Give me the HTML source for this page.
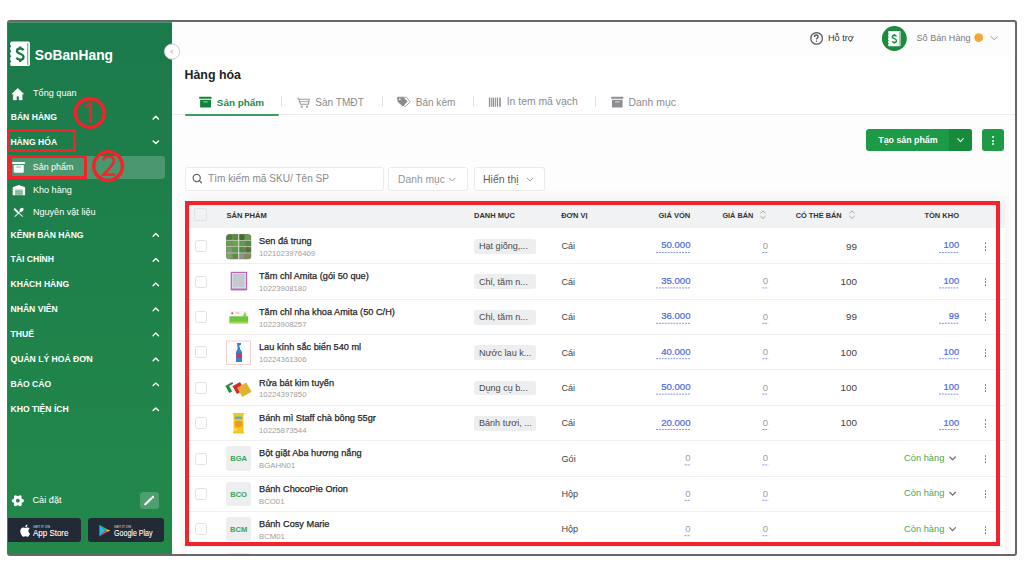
<!DOCTYPE html><html><head><meta charset="utf-8"><style>
*{box-sizing:border-box;margin:0;padding:0}
html,body{width:1024px;height:577px;overflow:hidden;background:#fff;font-family:"Liberation Sans",sans-serif;}
.a{position:absolute;white-space:nowrap}
.b{position:absolute}
svg{position:absolute;overflow:visible}
</style></head><body>
<div class="b" style="left:0;top:0;width:1024px;height:577px;clip-path:inset(22px 9px 23px 8px)">
<div class="b" style="left:8px;top:22px;width:163.5px;height:532px;background:linear-gradient(#1b7a4b,#22894a)"></div>
<div class="b" style="left:171.5px;top:22px;width:843.5px;height:532px;background:#fdfdfd"></div>
<div class="b" style="left:171.5px;top:22px;width:843.5px;height:34px;background:#fdfdfd"></div>
<div class="b" style="left:171.5px;top:55.5px;width:843.5px;height:1px;background:#f6f6f6"></div>
<div class="b" style="left:171.5px;top:56px;width:843.5px;height:59px;background:#fff"></div>
<div class="b" style="left:8px;top:22px;width:163.5px;height:1px;background:rgba(255,255,255,.22)"></div>
<div class="a" style="top:49.00px;font-size:13.8px;line-height:13.8px;color:#fff;font-weight:bold;left:34.80px;">SoBanHang</div>
<div class="a" style="top:89.00px;font-size:9.15px;line-height:9.15px;color:#fff;left:33.00px;">Tổng quan</div>
<div class="b" style="left:12px;top:156.1px;width:152.6px;height:22.8px;background:rgba(255,255,255,.2);border-radius:3px"></div>
<div class="a" style="top:113.00px;font-size:8.6px;line-height:8.6px;color:#fff;font-weight:bold;left:10.70px;">BÁN HÀNG</div>
<div class="a" style="top:138.00px;font-size:8.6px;line-height:8.6px;color:#fff;font-weight:bold;left:10.40px;">HÀNG HÓA</div>
<div class="a" style="top:163.00px;font-size:8.92px;line-height:8.92px;color:#fff;left:32.75px;">Sản phẩm</div>
<div class="a" style="top:186.00px;font-size:9.1px;line-height:9.1px;color:#fff;left:32.90px;">Kho hàng</div>
<div class="a" style="top:208.00px;font-size:9.1px;line-height:9.1px;color:#fff;left:32.90px;">Nguyên vật liệu</div>
<div class="a" style="top:231.00px;font-size:8.6px;line-height:8.6px;color:#fff;font-weight:bold;left:10.50px;">KÊNH BÁN HÀNG</div>
<div class="a" style="top:255.00px;font-size:8.6px;line-height:8.6px;color:#fff;font-weight:bold;left:10.50px;">TÀI CHÍNH</div>
<div class="a" style="top:280.00px;font-size:8.6px;line-height:8.6px;color:#fff;font-weight:bold;left:10.50px;">KHÁCH HÀNG</div>
<div class="a" style="top:305.00px;font-size:8.6px;line-height:8.6px;color:#fff;font-weight:bold;left:10.50px;">NHÂN VIÊN</div>
<div class="a" style="top:330.00px;font-size:8.6px;line-height:8.6px;color:#fff;font-weight:bold;left:10.50px;">THUẾ</div>
<div class="a" style="top:355.00px;font-size:8.6px;line-height:8.6px;color:#fff;font-weight:bold;left:10.50px;">QUẢN LÝ HOÁ ĐƠN</div>
<div class="a" style="top:380.00px;font-size:8.6px;line-height:8.6px;color:#fff;font-weight:bold;left:10.50px;">BÁO CÁO</div>
<div class="a" style="top:405.00px;font-size:8.6px;line-height:8.6px;color:#fff;font-weight:bold;left:10.50px;">KHO TIỆN ÍCH</div>
<svg style="left:0;top:0" width="1024" height="577"><path d="M153.10000000000002,118.89999999999999 L155.8,116.3 L158.5,118.89999999999999" fill="none" stroke="#fff" stroke-width="1.4" stroke-linecap="round" stroke-linejoin="round"/></svg>
<svg style="left:0;top:0" width="1024" height="577"><path d="M153.10000000000002,140.89999999999998 L155.8,143.5 L158.5,140.89999999999998" fill="none" stroke="#fff" stroke-width="1.4" stroke-linecap="round" stroke-linejoin="round"/></svg>
<svg style="left:0;top:0" width="1024" height="577"><path d="M153.10000000000002,236.20000000000002 L155.8,233.6 L158.5,236.20000000000002" fill="none" stroke="#fff" stroke-width="1.4" stroke-linecap="round" stroke-linejoin="round"/></svg>
<svg style="left:0;top:0" width="1024" height="577"><path d="M153.10000000000002,261.2 L155.8,258.59999999999997 L158.5,261.2" fill="none" stroke="#fff" stroke-width="1.4" stroke-linecap="round" stroke-linejoin="round"/></svg>
<svg style="left:0;top:0" width="1024" height="577"><path d="M153.10000000000002,285.7 L155.8,283.09999999999997 L158.5,285.7" fill="none" stroke="#fff" stroke-width="1.4" stroke-linecap="round" stroke-linejoin="round"/></svg>
<svg style="left:0;top:0" width="1024" height="577"><path d="M153.10000000000002,310.7 L155.8,308.09999999999997 L158.5,310.7" fill="none" stroke="#fff" stroke-width="1.4" stroke-linecap="round" stroke-linejoin="round"/></svg>
<svg style="left:0;top:0" width="1024" height="577"><path d="M153.10000000000002,335.7 L155.8,333.09999999999997 L158.5,335.7" fill="none" stroke="#fff" stroke-width="1.4" stroke-linecap="round" stroke-linejoin="round"/></svg>
<svg style="left:0;top:0" width="1024" height="577"><path d="M153.10000000000002,360.7 L155.8,358.09999999999997 L158.5,360.7" fill="none" stroke="#fff" stroke-width="1.4" stroke-linecap="round" stroke-linejoin="round"/></svg>
<svg style="left:0;top:0" width="1024" height="577"><path d="M153.10000000000002,385.59999999999997 L155.8,382.99999999999994 L158.5,385.59999999999997" fill="none" stroke="#fff" stroke-width="1.4" stroke-linecap="round" stroke-linejoin="round"/></svg>
<svg style="left:0;top:0" width="1024" height="577"><path d="M153.10000000000002,410.5 L155.8,407.9 L158.5,410.5" fill="none" stroke="#fff" stroke-width="1.4" stroke-linecap="round" stroke-linejoin="round"/></svg>
<div class="a" style="top:496.00px;font-size:9.16px;line-height:9.16px;color:#fff;left:32.50px;">Cài đặt</div>
<div class="b" style="left:140px;top:491.6px;width:19.4px;height:17.4px;background:rgba(255,255,255,.2);border-radius:3px"></div>
<div class="b" style="left:4px;top:518.3px;width:77.4px;height:23.7px;background:#222a36;border-radius:3px"></div>
<div class="b" style="left:87.9px;top:518.3px;width:76.4px;height:23.7px;background:#222a36;border-radius:3px"></div>
<div class="a" style="top:526.00px;font-size:3.4px;line-height:3.4px;color:#e8e8e8;left:33.00px;">GET IT ON</div>
<div class="a" style="top:528.00px;font-size:9.4px;line-height:9.4px;color:#fff;left:32.70px;transform-origin:0 0;transform:scaleX(0.85);-webkit-text-stroke:0.1px #fff">App Store</div>
<div class="a" style="top:526.00px;font-size:3.4px;line-height:3.4px;color:#e8e8e8;left:114.00px;">GET IT ON</div>
<div class="a" style="top:528.00px;font-size:9.4px;line-height:9.4px;color:#fff;left:113.90px;transform-origin:0 0;transform:scaleX(0.755);-webkit-text-stroke:0.1px #fff">Google Play</div>
<div class="a" style="top:34.00px;font-size:9.19px;line-height:9.19px;color:#333;left:827.90px;">Hỗ trợ</div>
<div class="a" style="top:34.00px;font-size:9.11px;line-height:9.11px;color:#7a7a7a;left:916.50px;">Số Bán Hàng</div>
<div class="a" style="top:69.00px;font-size:12.4px;line-height:12.4px;color:#222;font-weight:bold;left:184.50px;">Hàng hóa</div>
<div class="b" style="left:171.5px;top:114px;width:843.5px;height:1.2px;background:#ececec"></div>
<div class="b" style="left:184.5px;top:114px;width:94.5px;height:2.2px;background:#3a9e63;border-radius:1px"></div>
<div class="a" style="top:98.00px;font-size:9.9px;line-height:9.9px;color:#23894d;font-weight:bold;left:216.80px;">Sản phẩm</div>
<div class="a" style="top:98.00px;font-size:10.1px;line-height:10.1px;color:#8c8c8c;left:315.20px;">Sàn TMĐT</div>
<div class="a" style="top:98.00px;font-size:10.06px;line-height:10.06px;color:#8c8c8c;left:415.70px;">Bán kèm</div>
<div class="a" style="top:97.00px;font-size:10.4px;line-height:10.4px;color:#8c8c8c;left:506.70px;">In tem mã vạch</div>
<div class="a" style="top:98.00px;font-size:10.4px;line-height:10.4px;color:#8c8c8c;left:628.50px;">Danh mục</div>
<div class="b" style="left:280.8px;top:96px;width:1px;height:11px;background:#e3e3e3"></div>
<div class="b" style="left:381.6px;top:96px;width:1px;height:11px;background:#e3e3e3"></div>
<div class="b" style="left:473px;top:96px;width:1px;height:11px;background:#e3e3e3"></div>
<div class="b" style="left:594.8px;top:96px;width:1px;height:11px;background:#e3e3e3"></div>
<div class="b" style="left:184.5px;top:167.3px;width:199px;height:24px;background:#fff;border:1px solid #ebebeb;border-radius:3px"></div>
<div class="a" style="top:174.00px;font-size:10.1px;line-height:10.1px;color:#8a8a8a;left:208.10px;">Tìm kiếm mã SKU/ Tên SP</div>
<div class="b" style="left:388.4px;top:167.3px;width:79.8px;height:24px;background:#fff;border:1px solid #ebebeb;border-radius:3px"></div>
<div class="a" style="top:175.00px;font-size:10.3px;line-height:10.3px;color:#959595;left:398.00px;">Danh mục</div>
<div class="b" style="left:473.6px;top:167.3px;width:71.4px;height:24px;background:#fff;border:1px solid #ebebeb;border-radius:3px"></div>
<div class="a" style="top:174.00px;font-size:10.5px;line-height:10.5px;color:#5e5e5e;left:483.00px;">Hiển thị</div>
<svg style="left:0;top:0" width="1024" height="577"><path d="M449.5,178.2 L452.3,181.0 L455.1,178.2" fill="none" stroke="#999" stroke-width="1.0" stroke-linecap="round" stroke-linejoin="round"/></svg>
<svg style="left:0;top:0" width="1024" height="577"><path d="M527.2,178.2 L530,181.0 L532.8,178.2" fill="none" stroke="#999" stroke-width="1.0" stroke-linecap="round" stroke-linejoin="round"/></svg>
<div class="b" style="left:866.2px;top:128.7px;width:105.8px;height:22.8px;background:#1c9a45;border-radius:3px"></div>
<div class="b" style="left:948.6px;top:128.7px;width:23.6px;height:22.8px;background:#178b3b;border-radius:0 3px 3px 0"></div>
<div class="a" style="top:136.00px;font-size:8.82px;line-height:8.82px;color:#fff;font-weight:bold;left:878.30px;">Tạo sản phẩm</div>
<svg style="left:0;top:0" width="1024" height="577"><path d="M957.75,138.7 L960.5,141.7 L963.25,138.7" fill="none" stroke="#e8f5ea" stroke-width="1.1" stroke-linecap="round" stroke-linejoin="round"/></svg>
<div class="b" style="left:982.3px;top:128.7px;width:22px;height:22.8px;background:#1c9a45;border-radius:3px"></div>
<div class="b" style="left:992.3px;top:135.7px;width:2px;height:2px;background:#fff;border-radius:1px"></div>
<div class="b" style="left:992.3px;top:139.5px;width:2px;height:2px;background:#fff;border-radius:1px"></div>
<div class="b" style="left:992.3px;top:143.3px;width:2px;height:2px;background:#fff;border-radius:1px"></div>
<div class="b" style="left:186px;top:201px;width:818.5px;height:370px;background:#fff;box-shadow:0 -2px 14px rgba(0,0,0,.06)"></div>
<div class="b" style="left:186px;top:201px;width:818.5px;height:27.3px;background:#f0f2f4"></div>
<div class="a" style="top:212.00px;font-size:7.58px;line-height:7.58px;color:#333;font-weight:bold;left:226.40px;">SẢN PHẨM</div>
<div class="a" style="top:212.00px;font-size:7.5px;line-height:7.5px;color:#333;font-weight:bold;left:474.00px;">DANH MỤC</div>
<div class="a" style="top:212.00px;font-size:7.5px;line-height:7.5px;color:#333;font-weight:bold;left:561.20px;">ĐƠN VỊ</div>
<div class="a" style="top:212.00px;font-size:7.5px;line-height:7.5px;color:#333;font-weight:bold;right:333.80px;">GIÁ VỐN</div>
<div class="a" style="top:212.00px;font-size:7.32px;line-height:7.32px;color:#333;font-weight:bold;left:722.40px;">GIÁ BÁN</div>
<div class="a" style="top:212.00px;font-size:7.4px;line-height:7.4px;color:#333;font-weight:bold;left:795.70px;">CÓ THỂ BÁN</div>
<div class="a" style="top:212.00px;font-size:7.5px;line-height:7.5px;color:#333;font-weight:bold;right:65.00px;">TỒN KHO</div>
<div class="b" style="left:194.4px;top:208.4px;width:12.4px;height:12.4px;border:1px solid #dfe2e6;border-radius:2.5px;background:#f0f2f4"></div>
<div class="b" style="left:194.5px;top:240.10000000000002px;width:12.2px;height:12.2px;border:1px solid #dfe2e6;border-radius:2.5px;background:#fff"></div>
<!--img1-->
<svg style="left:226.3px;top:233.9px" width="25" height="25" viewBox="0 0 25 25"><defs><clipPath id="c1"><rect x="0" y="0" width="25.5" height="25.5" rx="4"/></clipPath></defs><g clip-path="url(#c1)"><rect x="0" y="0" width="25.5" height="25.5" fill="#7c8a5e"/><circle cx="3.2" cy="3.2" r="2.9" fill="#4f7d3e"/><circle cx="9.5" cy="3.2" r="2.9" fill="#5c8a48"/><circle cx="15.8" cy="3.2" r="2.9" fill="#3f6e35"/><circle cx="22.1" cy="3.2" r="2.9" fill="#6c9a52"/><circle cx="3.2" cy="9.5" r="2.9" fill="#5fa04a"/><circle cx="9.5" cy="9.5" r="2.9" fill="#6aa552"/><circle cx="15.8" cy="9.5" r="2.9" fill="#58a048"/><circle cx="22.1" cy="9.5" r="2.9" fill="#4f8d44"/><circle cx="3.2" cy="15.8" r="2.9" fill="#7d9c72"/><circle cx="9.5" cy="15.8" r="2.9" fill="#5c9a4c"/><circle cx="15.8" cy="15.8" r="2.9" fill="#4c8c44"/><circle cx="22.1" cy="15.8" r="2.9" fill="#5a6a4a"/><circle cx="3.2" cy="22.1" r="2.9" fill="#7aa070"/><circle cx="9.5" cy="22.1" r="2.9" fill="#5e8a4e"/><circle cx="15.8" cy="22.1" r="2.9" fill="#8c9090"/><circle cx="22.1" cy="22.1" r="2.9" fill="#86885c"/><rect x="12.3" y="0" width="0.9" height="25.5" fill="#e6ecea"/><rect x="0" y="6.1" width="25.5" height="0.6" fill="#d8dcd4"/><rect x="0" y="12.4" width="25.5" height="0.6" fill="#d8dcd4"/><rect x="0" y="18.7" width="25.5" height="0.6" fill="#e0e4dc"/></g></svg>
<div class="a" style="top:237.00px;font-size:9.2px;line-height:9.2px;color:#262626;left:259.00px;-webkit-text-stroke:0.25px #262626">Sen đá trung</div>
<div class="a" style="top:250.00px;font-size:7.78px;line-height:7.78px;color:#a0a0a0;left:259.00px;">1021023976409</div>
<div class="b" style="left:473.6px;top:239.0px;width:62.4px;height:14.9px;background:#eceef0;border-radius:2.5px"></div>
<div class="a" style="top:242.00px;font-size:9.1px;line-height:9.1px;color:#4a4a4a;left:478.90px;">Hạt giống,...</div>
<div class="a" style="top:242.00px;font-size:9.1px;line-height:9.1px;color:#444;left:561.50px;">Cái</div>
<div class="a" style="top:240.00px;font-size:9.6px;line-height:9.6px;color:#4a68de;right:333.50px;-webkit-text-stroke:0.2px #4a68de">50.000</div>
<svg style="left:0;top:0" width="1024" height="577"><path d="M656,252.5 H690.5" stroke="#7088e6" stroke-width="0.9" stroke-dasharray="1.9 1"/></svg>
<div class="a" style="top:241.00px;font-size:9.6px;line-height:9.6px;color:#a0a0a0;right:255.80px;">0</div>
<svg style="left:0;top:0" width="1024" height="577"><path d="M762.4,252.5 H768.4" stroke="#7088e6" stroke-width="0.9" stroke-dasharray="1.9 1"/></svg>
<div class="a" style="top:242.00px;font-size:9.9px;line-height:9.9px;color:#444;right:167.00px;">99</div>
<div class="a" style="top:241.00px;font-size:9.3px;line-height:9.3px;color:#4a68de;right:64.90px;-webkit-text-stroke:0.2px #4a68de">100</div>
<svg style="left:0;top:0" width="1024" height="577"><path d="M939,252.5 H959" stroke="#7088e6" stroke-width="0.9" stroke-dasharray="1.9 1"/></svg>
<div class="b" style="left:984.5px;top:242px;width:1.5px;height:1.5px;background:#777;border-radius:1px"></div>
<div class="b" style="left:984.5px;top:246px;width:1.5px;height:1.5px;background:#777;border-radius:1px"></div>
<div class="b" style="left:984.5px;top:249px;width:1.5px;height:1.5px;background:#777;border-radius:1px"></div>
<div class="b" style="left:186px;top:263.2px;width:818.5px;height:1px;background:#eef0f2"></div>
<div class="b" style="left:194.5px;top:275.5px;width:12.2px;height:12.2px;border:1px solid #dfe2e6;border-radius:2.5px;background:#fff"></div>
<!--img2-->
<svg style="left:226.3px;top:269.3px" width="25" height="25" viewBox="0 0 25 25"><rect x="4.7" y="2.8" width="16.5" height="18.6" fill="#b866b4"/><rect x="5.9" y="4" width="14.1" height="15.6" fill="#d6d9de"/><rect x="7" y="5" width="11.5" height="13" fill="#c4c8d0"/></svg>
<div class="a" style="top:272.00px;font-size:9.2px;line-height:9.2px;color:#262626;left:259.00px;-webkit-text-stroke:0.25px #262626">Tăm chỉ Amita (gói 50 que)</div>
<div class="a" style="top:285.00px;font-size:7.78px;line-height:7.78px;color:#a0a0a0;left:259.00px;">10223908180</div>
<div class="b" style="left:473.6px;top:274.4px;width:62.4px;height:14.9px;background:#eceef0;border-radius:2.5px"></div>
<div class="a" style="top:278.00px;font-size:9.1px;line-height:9.1px;color:#4a4a4a;left:478.90px;">Chỉ, tăm n...</div>
<div class="a" style="top:278.00px;font-size:9.1px;line-height:9.1px;color:#444;left:561.50px;">Cái</div>
<div class="a" style="top:276.00px;font-size:9.6px;line-height:9.6px;color:#4a68de;right:333.50px;-webkit-text-stroke:0.2px #4a68de">35.000</div>
<svg style="left:0;top:0" width="1024" height="577"><path d="M656,287.9 H690.5" stroke="#7088e6" stroke-width="0.9" stroke-dasharray="1.9 1"/></svg>
<div class="a" style="top:276.00px;font-size:9.6px;line-height:9.6px;color:#a0a0a0;right:255.80px;">0</div>
<svg style="left:0;top:0" width="1024" height="577"><path d="M762.4,287.9 H768.4" stroke="#7088e6" stroke-width="0.9" stroke-dasharray="1.9 1"/></svg>
<div class="a" style="top:277.00px;font-size:9.9px;line-height:9.9px;color:#444;right:167.00px;">100</div>
<div class="a" style="top:277.00px;font-size:9.3px;line-height:9.3px;color:#4a68de;right:64.90px;-webkit-text-stroke:0.2px #4a68de">100</div>
<svg style="left:0;top:0" width="1024" height="577"><path d="M939,287.9 H959" stroke="#7088e6" stroke-width="0.9" stroke-dasharray="1.9 1"/></svg>
<div class="b" style="left:984.5px;top:278px;width:1.5px;height:1.5px;background:#777;border-radius:1px"></div>
<div class="b" style="left:984.5px;top:281px;width:1.5px;height:1.5px;background:#777;border-radius:1px"></div>
<div class="b" style="left:984.5px;top:284px;width:1.5px;height:1.5px;background:#777;border-radius:1px"></div>
<div class="b" style="left:186px;top:298.6px;width:818.5px;height:1px;background:#eef0f2"></div>
<div class="b" style="left:194.5px;top:310.90000000000003px;width:12.2px;height:12.2px;border:1px solid #dfe2e6;border-radius:2.5px;background:#fff"></div>
<!--img3-->
<svg style="left:226.3px;top:304.70000000000005px" width="25" height="25" viewBox="0 0 25 25"><rect x="3.4" y="6.1" width="18.7" height="12.2" rx="0.8" fill="#f4f6f2"/><rect x="3.4" y="11.3" width="18.7" height="7" fill="#6cc644"/><rect x="3.4" y="16.6" width="18.7" height="1.7" fill="#a9d84e"/><circle cx="6.2" cy="8.2" r="1" fill="#e0443a"/><rect x="9.5" y="7.4" width="4" height="1.2" fill="#f0b8c8"/><path d="M16.5,12 L19,6.8 L21,12 Z" fill="#8ccf4a"/></svg>
<div class="a" style="top:308.00px;font-size:9.2px;line-height:9.2px;color:#262626;left:259.00px;-webkit-text-stroke:0.25px #262626">Tăm chỉ nha khoa Amita (50 C/H)</div>
<div class="a" style="top:321.00px;font-size:7.78px;line-height:7.78px;color:#a0a0a0;left:259.00px;">10223908257</div>
<div class="b" style="left:473.6px;top:309.8px;width:62.4px;height:14.9px;background:#eceef0;border-radius:2.5px"></div>
<div class="a" style="top:313.00px;font-size:9.1px;line-height:9.1px;color:#4a4a4a;left:478.90px;">Chỉ, tăm n...</div>
<div class="a" style="top:313.00px;font-size:9.1px;line-height:9.1px;color:#444;left:561.50px;">Cái</div>
<div class="a" style="top:311.00px;font-size:9.6px;line-height:9.6px;color:#4a68de;right:333.50px;-webkit-text-stroke:0.2px #4a68de">36.000</div>
<svg style="left:0;top:0" width="1024" height="577"><path d="M656,323.3 H690.5" stroke="#7088e6" stroke-width="0.9" stroke-dasharray="1.9 1"/></svg>
<div class="a" style="top:312.00px;font-size:9.6px;line-height:9.6px;color:#a0a0a0;right:255.80px;">0</div>
<svg style="left:0;top:0" width="1024" height="577"><path d="M762.4,323.3 H768.4" stroke="#7088e6" stroke-width="0.9" stroke-dasharray="1.9 1"/></svg>
<div class="a" style="top:312.00px;font-size:9.9px;line-height:9.9px;color:#444;right:167.00px;">99</div>
<div class="a" style="top:312.00px;font-size:9.3px;line-height:9.3px;color:#4a68de;right:64.90px;-webkit-text-stroke:0.2px #4a68de">99</div>
<svg style="left:0;top:0" width="1024" height="577"><path d="M939,323.3 H959" stroke="#7088e6" stroke-width="0.9" stroke-dasharray="1.9 1"/></svg>
<div class="b" style="left:984.5px;top:313px;width:1.5px;height:1.5px;background:#777;border-radius:1px"></div>
<div class="b" style="left:984.5px;top:316px;width:1.5px;height:1.5px;background:#777;border-radius:1px"></div>
<div class="b" style="left:984.5px;top:319px;width:1.5px;height:1.5px;background:#777;border-radius:1px"></div>
<div class="b" style="left:186px;top:334.0px;width:818.5px;height:1px;background:#eef0f2"></div>
<div class="b" style="left:194.5px;top:346.3px;width:12.2px;height:12.2px;border:1px solid #dfe2e6;border-radius:2.5px;background:#fff"></div>
<!--img4-->
<svg style="left:226.3px;top:340.1px" width="25" height="25" viewBox="0 0 25 25"><rect x="0.5" y="1" width="24" height="23.5" fill="none" stroke="#f4c6c8" stroke-width="0.8"/><path d="M11 3 h4 v2 h-1 l-1 2 h1 v2 l2 3 v10 h-6 v-10 l1.5 -3 v-2 z" fill="#3d7fd0"/><rect x="10.5" y="13" width="5" height="5" fill="#c43c5a"/></svg>
<div class="a" style="top:343.00px;font-size:9.2px;line-height:9.2px;color:#262626;left:259.00px;-webkit-text-stroke:0.25px #262626">Lau kính sắc biển 540 ml</div>
<div class="a" style="top:356.00px;font-size:7.78px;line-height:7.78px;color:#a0a0a0;left:259.00px;">10224361306</div>
<div class="b" style="left:473.6px;top:345.2px;width:62.4px;height:14.9px;background:#eceef0;border-radius:2.5px"></div>
<div class="a" style="top:349.00px;font-size:9.1px;line-height:9.1px;color:#4a4a4a;left:478.90px;">Nước lau k...</div>
<div class="a" style="top:349.00px;font-size:9.1px;line-height:9.1px;color:#444;left:561.50px;">Cái</div>
<div class="a" style="top:347.00px;font-size:9.6px;line-height:9.6px;color:#4a68de;right:333.50px;-webkit-text-stroke:0.2px #4a68de">40.000</div>
<svg style="left:0;top:0" width="1024" height="577"><path d="M656,358.7 H690.5" stroke="#7088e6" stroke-width="0.9" stroke-dasharray="1.9 1"/></svg>
<div class="a" style="top:347.00px;font-size:9.6px;line-height:9.6px;color:#a0a0a0;right:255.80px;">0</div>
<svg style="left:0;top:0" width="1024" height="577"><path d="M762.4,358.7 H768.4" stroke="#7088e6" stroke-width="0.9" stroke-dasharray="1.9 1"/></svg>
<div class="a" style="top:348.00px;font-size:9.9px;line-height:9.9px;color:#444;right:167.00px;">100</div>
<div class="a" style="top:348.00px;font-size:9.3px;line-height:9.3px;color:#4a68de;right:64.90px;-webkit-text-stroke:0.2px #4a68de">100</div>
<svg style="left:0;top:0" width="1024" height="577"><path d="M939,358.7 H959" stroke="#7088e6" stroke-width="0.9" stroke-dasharray="1.9 1"/></svg>
<div class="b" style="left:984.5px;top:349px;width:1.5px;height:1.5px;background:#777;border-radius:1px"></div>
<div class="b" style="left:984.5px;top:352px;width:1.5px;height:1.5px;background:#777;border-radius:1px"></div>
<div class="b" style="left:984.5px;top:355px;width:1.5px;height:1.5px;background:#777;border-radius:1px"></div>
<div class="b" style="left:186px;top:369.4px;width:818.5px;height:1px;background:#eef0f2"></div>
<div class="b" style="left:194.5px;top:381.7px;width:12.2px;height:12.2px;border:1px solid #dfe2e6;border-radius:2.5px;background:#fff"></div>
<!--img5-->
<svg style="left:226.3px;top:375.5px" width="25" height="25" viewBox="0 0 25 25"><rect x="0.8" y="7.5" width="8" height="8" transform="rotate(-30 4.8 11.5)" fill="#2a8a3e"/><rect x="4.5" y="7.5" width="8" height="8" transform="rotate(-30 8.5 11.5)" fill="#f4f4f4"/><rect x="8.2" y="7.6" width="8.6" height="8.8" transform="rotate(-30 12.5 12)" fill="#d9272e"/><rect x="13" y="8.4" width="10.6" height="10.6" transform="rotate(-30 18.3 13.7)" fill="#e0b232"/></svg>
<div class="a" style="top:379.00px;font-size:9.2px;line-height:9.2px;color:#262626;left:259.00px;-webkit-text-stroke:0.25px #262626">Rửa bát kim tuyến</div>
<div class="a" style="top:391.00px;font-size:7.78px;line-height:7.78px;color:#a0a0a0;left:259.00px;">10224397850</div>
<div class="b" style="left:473.6px;top:380.59999999999997px;width:62.4px;height:14.9px;background:#eceef0;border-radius:2.5px"></div>
<div class="a" style="top:384.00px;font-size:9.1px;line-height:9.1px;color:#4a4a4a;left:478.90px;">Dụng cụ b...</div>
<div class="a" style="top:384.00px;font-size:9.1px;line-height:9.1px;color:#444;left:561.50px;">Cái</div>
<div class="a" style="top:382.00px;font-size:9.6px;line-height:9.6px;color:#4a68de;right:333.50px;-webkit-text-stroke:0.2px #4a68de">50.000</div>
<svg style="left:0;top:0" width="1024" height="577"><path d="M656,394.09999999999997 H690.5" stroke="#7088e6" stroke-width="0.9" stroke-dasharray="1.9 1"/></svg>
<div class="a" style="top:383.00px;font-size:9.6px;line-height:9.6px;color:#a0a0a0;right:255.80px;">0</div>
<svg style="left:0;top:0" width="1024" height="577"><path d="M762.4,394.09999999999997 H768.4" stroke="#7088e6" stroke-width="0.9" stroke-dasharray="1.9 1"/></svg>
<div class="a" style="top:383.00px;font-size:9.9px;line-height:9.9px;color:#444;right:167.00px;">100</div>
<div class="a" style="top:383.00px;font-size:9.3px;line-height:9.3px;color:#4a68de;right:64.90px;-webkit-text-stroke:0.2px #4a68de">100</div>
<svg style="left:0;top:0" width="1024" height="577"><path d="M939,394.09999999999997 H959" stroke="#7088e6" stroke-width="0.9" stroke-dasharray="1.9 1"/></svg>
<div class="b" style="left:984.5px;top:384px;width:1.5px;height:1.5px;background:#777;border-radius:1px"></div>
<div class="b" style="left:984.5px;top:387px;width:1.5px;height:1.5px;background:#777;border-radius:1px"></div>
<div class="b" style="left:984.5px;top:390px;width:1.5px;height:1.5px;background:#777;border-radius:1px"></div>
<div class="b" style="left:186px;top:404.8px;width:818.5px;height:1px;background:#eef0f2"></div>
<div class="b" style="left:194.5px;top:417.1px;width:12.2px;height:12.2px;border:1px solid #dfe2e6;border-radius:2.5px;background:#fff"></div>
<!--img6-->
<svg style="left:226.3px;top:410.90000000000003px" width="25" height="25" viewBox="0 0 25 25"><path d="M6.8,2 H18.2 L17.4,4.5 V19.5 L18.2,22.5 H6.8 L7.6,19.5 V4.5 Z" fill="#f2c81e"/><rect x="9" y="5.5" width="7" height="2.6" rx="0.6" fill="#5ea8d8"/><ellipse cx="12.6" cy="13" rx="3.8" ry="3.2" fill="#eb9a2a"/><rect x="8.4" y="17.8" width="2" height="1.6" fill="#f8e8d0"/></svg>
<div class="a" style="top:414.00px;font-size:9.2px;line-height:9.2px;color:#262626;left:259.00px;-webkit-text-stroke:0.25px #262626">Bánh mì Staff chà bông 55gr</div>
<div class="a" style="top:427.00px;font-size:7.78px;line-height:7.78px;color:#a0a0a0;left:259.00px;">10225873544</div>
<div class="b" style="left:473.6px;top:416.0px;width:62.4px;height:14.9px;background:#eceef0;border-radius:2.5px"></div>
<div class="a" style="top:419.00px;font-size:9.1px;line-height:9.1px;color:#4a4a4a;left:478.90px;">Bánh tươi, ...</div>
<div class="a" style="top:419.00px;font-size:9.1px;line-height:9.1px;color:#444;left:561.50px;">Cái</div>
<div class="a" style="top:418.00px;font-size:9.6px;line-height:9.6px;color:#4a68de;right:333.50px;-webkit-text-stroke:0.2px #4a68de">20.000</div>
<svg style="left:0;top:0" width="1024" height="577"><path d="M656,429.5 H690.5" stroke="#7088e6" stroke-width="0.9" stroke-dasharray="1.9 1"/></svg>
<div class="a" style="top:418.00px;font-size:9.6px;line-height:9.6px;color:#a0a0a0;right:255.80px;">0</div>
<svg style="left:0;top:0" width="1024" height="577"><path d="M762.4,429.5 H768.4" stroke="#7088e6" stroke-width="0.9" stroke-dasharray="1.9 1"/></svg>
<div class="a" style="top:418.00px;font-size:9.9px;line-height:9.9px;color:#444;right:167.00px;">100</div>
<div class="a" style="top:419.00px;font-size:9.3px;line-height:9.3px;color:#4a68de;right:64.90px;-webkit-text-stroke:0.2px #4a68de">100</div>
<svg style="left:0;top:0" width="1024" height="577"><path d="M939,429.5 H959" stroke="#7088e6" stroke-width="0.9" stroke-dasharray="1.9 1"/></svg>
<div class="b" style="left:984.5px;top:419px;width:1.5px;height:1.5px;background:#777;border-radius:1px"></div>
<div class="b" style="left:984.5px;top:423px;width:1.5px;height:1.5px;background:#777;border-radius:1px"></div>
<div class="b" style="left:984.5px;top:426px;width:1.5px;height:1.5px;background:#777;border-radius:1px"></div>
<div class="b" style="left:186px;top:440.2px;width:818.5px;height:1px;background:#eef0f2"></div>
<div class="b" style="left:194.5px;top:452.5px;width:12.2px;height:12.2px;border:1px solid #dfe2e6;border-radius:2.5px;background:#fff"></div>
<div class="b" style="left:226.3px;top:446.3px;width:24.6px;height:24.4px;background:#eceef0;border-radius:3px"></div>
<div class="a" style="top:455.00px;font-size:7.6px;line-height:7.6px;color:#3aa556;font-weight:bold;left:188.60px;width:100px;text-align:center;">BGA</div>
<div class="a" style="top:449.00px;font-size:9.2px;line-height:9.2px;color:#262626;left:259.00px;-webkit-text-stroke:0.25px #262626">Bột giặt Aba hương nắng</div>
<div class="a" style="top:462.00px;font-size:7.78px;line-height:7.78px;color:#a0a0a0;left:259.00px;">BGAHN01</div>
<div class="a" style="top:455.00px;font-size:9.1px;line-height:9.1px;color:#444;left:561.50px;">Gói</div>
<div class="a" style="top:453.00px;font-size:9.6px;line-height:9.6px;color:#a0a0a0;right:333.50px;">0</div>
<svg style="left:0;top:0" width="1024" height="577"><path d="M684.6,464.9 H690.6" stroke="#7088e6" stroke-width="0.9" stroke-dasharray="1.9 1"/></svg>
<div class="a" style="top:453.00px;font-size:9.6px;line-height:9.6px;color:#a0a0a0;right:255.80px;">0</div>
<svg style="left:0;top:0" width="1024" height="577"><path d="M762.4,464.9 H768.4" stroke="#7088e6" stroke-width="0.9" stroke-dasharray="1.9 1"/></svg>
<div class="a" style="top:454.00px;font-size:9.3px;line-height:9.3px;color:#4fa64f;left:904.00px;">Còn hàng</div>
<svg style="left:0;top:0" width="1024" height="577"><path d="M949.8000000000001,456.85 L952.6,459.75 L955.4,456.85" fill="none" stroke="#666" stroke-width="1.1" stroke-linecap="round" stroke-linejoin="round"/></svg>
<div class="b" style="left:984.5px;top:455px;width:1.5px;height:1.5px;background:#777;border-radius:1px"></div>
<div class="b" style="left:984.5px;top:458px;width:1.5px;height:1.5px;background:#777;border-radius:1px"></div>
<div class="b" style="left:984.5px;top:461px;width:1.5px;height:1.5px;background:#777;border-radius:1px"></div>
<div class="b" style="left:186px;top:475.6px;width:818.5px;height:1px;background:#eef0f2"></div>
<div class="b" style="left:194.5px;top:487.90000000000003px;width:12.2px;height:12.2px;border:1px solid #dfe2e6;border-radius:2.5px;background:#fff"></div>
<div class="b" style="left:226.3px;top:481.70000000000005px;width:24.6px;height:24.4px;background:#eceef0;border-radius:3px"></div>
<div class="a" style="top:491.00px;font-size:7.6px;line-height:7.6px;color:#3aa556;font-weight:bold;left:188.60px;width:100px;text-align:center;">BCO</div>
<div class="a" style="top:485.00px;font-size:9.2px;line-height:9.2px;color:#262626;left:259.00px;-webkit-text-stroke:0.25px #262626">Bánh ChocoPie Orion</div>
<div class="a" style="top:498.00px;font-size:7.78px;line-height:7.78px;color:#a0a0a0;left:259.00px;">BCO01</div>
<div class="a" style="top:490.00px;font-size:9.1px;line-height:9.1px;color:#444;left:561.50px;">Hộp</div>
<div class="a" style="top:489.00px;font-size:9.6px;line-height:9.6px;color:#a0a0a0;right:333.50px;">0</div>
<svg style="left:0;top:0" width="1024" height="577"><path d="M684.6,500.3 H690.6" stroke="#7088e6" stroke-width="0.9" stroke-dasharray="1.9 1"/></svg>
<div class="a" style="top:489.00px;font-size:9.6px;line-height:9.6px;color:#a0a0a0;right:255.80px;">0</div>
<svg style="left:0;top:0" width="1024" height="577"><path d="M762.4,500.3 H768.4" stroke="#7088e6" stroke-width="0.9" stroke-dasharray="1.9 1"/></svg>
<div class="a" style="top:489.00px;font-size:9.3px;line-height:9.3px;color:#4fa64f;left:904.00px;">Còn hàng</div>
<svg style="left:0;top:0" width="1024" height="577"><path d="M949.8000000000001,492.25000000000006 L952.6,495.15000000000003 L955.4,492.25000000000006" fill="none" stroke="#666" stroke-width="1.1" stroke-linecap="round" stroke-linejoin="round"/></svg>
<div class="b" style="left:984.5px;top:490px;width:1.5px;height:1.5px;background:#777;border-radius:1px"></div>
<div class="b" style="left:984.5px;top:493px;width:1.5px;height:1.5px;background:#777;border-radius:1px"></div>
<div class="b" style="left:984.5px;top:496px;width:1.5px;height:1.5px;background:#777;border-radius:1px"></div>
<div class="b" style="left:186px;top:511.0px;width:818.5px;height:1px;background:#eef0f2"></div>
<div class="b" style="left:194.5px;top:523.3px;width:12.2px;height:12.2px;border:1px solid #dfe2e6;border-radius:2.5px;background:#fff"></div>
<div class="b" style="left:226.3px;top:517.1px;width:24.6px;height:24.4px;background:#eceef0;border-radius:3px"></div>
<div class="a" style="top:526.00px;font-size:7.6px;line-height:7.6px;color:#3aa556;font-weight:bold;left:188.60px;width:100px;text-align:center;">BCM</div>
<div class="a" style="top:520.00px;font-size:9.2px;line-height:9.2px;color:#262626;left:259.00px;-webkit-text-stroke:0.25px #262626">Bánh Cosy Marie</div>
<div class="a" style="top:533.00px;font-size:7.78px;line-height:7.78px;color:#a0a0a0;left:259.00px;">BCM01</div>
<div class="a" style="top:525.00px;font-size:9.1px;line-height:9.1px;color:#444;left:561.50px;">Hộp</div>
<div class="a" style="top:524.00px;font-size:9.6px;line-height:9.6px;color:#a0a0a0;right:333.50px;">0</div>
<svg style="left:0;top:0" width="1024" height="577"><path d="M684.6,535.7 H690.6" stroke="#7088e6" stroke-width="0.9" stroke-dasharray="1.9 1"/></svg>
<div class="a" style="top:524.00px;font-size:9.6px;line-height:9.6px;color:#a0a0a0;right:255.80px;">0</div>
<svg style="left:0;top:0" width="1024" height="577"><path d="M762.4,535.7 H768.4" stroke="#7088e6" stroke-width="0.9" stroke-dasharray="1.9 1"/></svg>
<div class="a" style="top:525.00px;font-size:9.3px;line-height:9.3px;color:#4fa64f;left:904.00px;">Còn hàng</div>
<svg style="left:0;top:0" width="1024" height="577"><path d="M949.8000000000001,527.65 L952.6,530.5500000000001 L955.4,527.65" fill="none" stroke="#666" stroke-width="1.1" stroke-linecap="round" stroke-linejoin="round"/></svg>
<div class="b" style="left:984.5px;top:526px;width:1.5px;height:1.5px;background:#777;border-radius:1px"></div>
<div class="b" style="left:984.5px;top:529px;width:1.5px;height:1.5px;background:#777;border-radius:1px"></div>
<div class="b" style="left:984.5px;top:532px;width:1.5px;height:1.5px;background:#777;border-radius:1px"></div>
<div class="b" style="left:186px;top:546.4px;width:818.5px;height:1px;background:#eef0f2"></div>
<div class="b" style="left:194.5px;top:558.6999999999999px;width:12.2px;height:12.2px;border:1px solid #dfe2e6;border-radius:2.5px;background:#fff"></div>
<div class="b" style="left:226.3px;top:552.5px;width:24.6px;height:24.4px;background:#eceef0;border-radius:3px"></div>
<div class="a" style="top:562.00px;font-size:7.6px;line-height:7.6px;color:#3aa556;font-weight:bold;left:188.60px;width:100px;text-align:center;">BCT</div>
<div class="a" style="top:556.00px;font-size:9.2px;line-height:9.2px;color:#262626;left:259.00px;-webkit-text-stroke:0.25px #262626">Bánh Custas</div>
<div class="a" style="top:568.00px;font-size:7.78px;line-height:7.78px;color:#a0a0a0;left:259.00px;">BCT01</div>
<div class="a" style="top:561.00px;font-size:9.1px;line-height:9.1px;color:#444;left:561.50px;">Hộp</div>
<div class="a" style="top:560.00px;font-size:9.6px;line-height:9.6px;color:#a0a0a0;right:333.50px;">0</div>
<svg style="left:0;top:0" width="1024" height="577"><path d="M684.6,571.1 H690.6" stroke="#7088e6" stroke-width="0.9" stroke-dasharray="1.9 1"/></svg>
<div class="a" style="top:560.00px;font-size:9.6px;line-height:9.6px;color:#a0a0a0;right:255.80px;">0</div>
<svg style="left:0;top:0" width="1024" height="577"><path d="M762.4,571.1 H768.4" stroke="#7088e6" stroke-width="0.9" stroke-dasharray="1.9 1"/></svg>
<div class="a" style="top:560.00px;font-size:9.3px;line-height:9.3px;color:#4fa64f;left:904.00px;">Còn hàng</div>
<svg style="left:0;top:0" width="1024" height="577"><path d="M949.8000000000001,563.05 L952.6,565.95 L955.4,563.05" fill="none" stroke="#666" stroke-width="1.1" stroke-linecap="round" stroke-linejoin="round"/></svg>
<div class="b" style="left:984.5px;top:561px;width:1.5px;height:1.5px;background:#777;border-radius:1px"></div>
<div class="b" style="left:984.5px;top:564px;width:1.5px;height:1.5px;background:#777;border-radius:1px"></div>
<div class="b" style="left:984.5px;top:567px;width:1.5px;height:1.5px;background:#777;border-radius:1px"></div>
<svg style="left:0;top:0" width="1024" height="577"><g transform="translate(10.2,41.6) scale(1.0)"><rect x="0" y="0" width="19.7" height="24.4" rx="1.6" fill="#fff"/><circle cx="0" cy="4.7" r="1" fill="#1c7b4b"/><circle cx="0" cy="9.7" r="1" fill="#1c7b4b"/><circle cx="0" cy="14.7" r="1" fill="#1c7b4b"/><circle cx="0" cy="19.9" r="1" fill="#1c7b4b"/><rect x="17.2" y="1.5" width="0.8" height="22" fill="#1c7b4b" opacity="0.9"/><path d="M13.2,8.8 C12.7,7.5 11.5,6.9 10,6.9 C8.2,6.9 6.8,7.8 6.8,9.4 C6.8,12.8 13.3,11.5 13.3,15.3 C13.3,17 11.9,18.1 9.9,18.1 C8.2,18.1 7,17.4 6.5,16.1 M9.95,4.8 V6.9 M9.95,18.1 V20.4" fill="none" stroke="#1c7b4b" stroke-width="2.3" stroke-linecap="butt"/></g><path d="M17.7,88.2 L23.8,94.1 L22.2,94.1 V99.9 H19.1 V97.4 A1.3,1.3 0 0 0 16.5,97.4 V99.9 H13.2 V94.1 H11.8 Z" fill="#fff" stroke="#fff" stroke-width="0.4" stroke-linejoin="round"/><rect x="12.2" y="162.1" width="12.8" height="1.9" rx="0.4" fill="#fff"/><path d="M13.7,165 H23.8 V171.6 Q23.8,172.8 22.6,172.8 H14.9 Q13.7,172.8 13.7,171.6 Z" fill="#fff"/><rect x="16.2" y="166.4" width="4.8" height="1.1" rx="0.5" fill="#7aa890"/><path d="M12.7,187.3 L18.9,185.1 L25.1,187.3 V195.3 H22.6 V189.8 H15.3 V195.3 H12.7 Z" fill="#fff"/><rect x="15.3" y="189.8" width="7.3" height="5.5" fill="#fff" opacity="0.55"/><path d="M15.3,191.6 H22.6 M15.3,193.4 H22.6" stroke="#1f7f4c" stroke-width="0.4" opacity="0.6"/><path d="M14.7,209.2 L17.4,211.8" stroke="#fff" stroke-width="1.9" stroke-linecap="round"/><path d="M17.4,211.8 L22.6,216.3 M20.3,211.3 L15,216.3" stroke="#fff" stroke-width="1.05" stroke-linecap="round" opacity="0.9"/><ellipse cx="21.6" cy="209.8" rx="2.3" ry="1.7" transform="rotate(-45 21.6 209.8)" fill="#fff"/><g fill="#fff"><circle cx="17.8" cy="500.7" r="4.6"/><circle cx="22.20" cy="500.70" r="1.75"/><circle cx="20.00" cy="504.51" r="1.75"/><circle cx="15.60" cy="504.51" r="1.75"/><circle cx="13.40" cy="500.70" r="1.75"/><circle cx="15.60" cy="496.89" r="1.75"/><circle cx="20.00" cy="496.89" r="1.75"/></g><circle cx="17.8" cy="500.7" r="1.9" fill="#238a4a"/><g transform="translate(19.2,523.8)"><path d="M9.2,7.1 C9.2,5.6 10.4,4.9 10.5,4.8 C9.8,3.8 8.7,3.7 8.3,3.7 C7.4,3.6 6.5,4.2 6.1,4.2 C5.6,4.2 4.9,3.7 4.1,3.7 C3.1,3.7 2.1,4.3 1.6,5.2 C0.5,7.1 1.3,9.9 2.4,11.4 C2.9,12.1 3.5,12.9 4.3,12.9 C5.1,12.9 5.4,12.4 6.3,12.4 C7.2,12.4 7.5,12.9 8.3,12.9 C9.1,12.9 9.6,12.2 10.1,11.4 C10.7,10.6 10.9,9.8 10.9,9.7 C10.9,9.7 9.2,9.1 9.2,7.1 Z M7.7,2.6 C8.1,2.1 8.4,1.4 8.3,0.7 C7.7,0.7 7,1.1 6.6,1.6 C6.2,2 5.9,2.7 6,3.4 C6.6,3.4 7.3,3.1 7.7,2.6 Z" fill="#fff"/></g><g transform="translate(99.4,524.8)"><path d="M0,0 L6.2,5.8 L0,11.6 Z" fill="#29b6e6"/><path d="M0,0 L8.3,4.6 L6.2,5.8 Z" fill="#35c27a"/><path d="M0,11.6 L6.2,5.8 L8.3,7 Z" fill="#e9434c"/><path d="M8.3,4.6 L11,5.8 L8.3,7 L6.2,5.8 Z" fill="#f9c226"/></g><path d="M145.3,504.2 L151.4,498.4" stroke="#fff" stroke-width="2.2" stroke-linecap="round"/><circle cx="152.9" cy="497" r="1.2" fill="#fff"/><circle cx="172" cy="51.6" r="7.6" fill="#fff" stroke="#c8c8c8" stroke-width="0.9"/><path d="M172.8,49.9 L171.1,51.6 L172.8,53.3" fill="none" stroke="#888" stroke-width="0.9"/><circle cx="816.6" cy="38.4" r="5.8" fill="none" stroke="#555" stroke-width="1.2"/><path d="M814.5,36.9 C814.5,35.6 815.4,35 816.3,35 C817.4,35 818.2,35.7 818.2,36.7 C818.2,38 816.5,38.2 816.5,39.6" fill="none" stroke="#555" stroke-width="1.3"/><circle cx="816.5" cy="41.2" r="0.75" fill="#555"/><circle cx="894.35" cy="38.55" r="12.45" fill="#1a8c3e"/><g transform="translate(888.1,31.0) scale(0.63)"><rect x="0" y="0" width="19.7" height="24.4" rx="1.6" fill="#fff"/><circle cx="0" cy="4.7" r="1" fill="#1a8c3e"/><circle cx="0" cy="9.7" r="1" fill="#1a8c3e"/><circle cx="0" cy="14.7" r="1" fill="#1a8c3e"/><circle cx="0" cy="19.9" r="1" fill="#1a8c3e"/><rect x="17.2" y="1.5" width="0.8" height="22" fill="#1a8c3e" opacity="0.9"/><path d="M13.2,8.8 C12.7,7.5 11.5,6.9 10,6.9 C8.2,6.9 6.8,7.8 6.8,9.4 C6.8,12.8 13.3,11.5 13.3,15.3 C13.3,17 11.9,18.1 9.9,18.1 C8.2,18.1 7,17.4 6.5,16.1 M9.95,4.8 V6.9 M9.95,18.1 V20.4" fill="none" stroke="#1a8c3e" stroke-width="2.3" stroke-linecap="butt"/></g><circle cx="978.65" cy="37.6" r="4.4" fill="#f4a83a"/><path d="M990.7,36.4 L994.2,39.7 L997.7,36.4" fill="none" stroke="#9a9a9a" stroke-width="1"/><rect x="199.2" y="96.85" width="12.3" height="1.9" rx="0.5" fill="#12843a"/><path d="M200.1,99.8 H211 V106.4 Q211,107.6 209.8,107.6 H201.3 Q200.1,107.6 200.1,106.4 Z" fill="#12843a"/><rect x="203.2" y="101.2" width="4.5" height="1.2" rx="0.5" fill="#8cc4a0"/><path d="M297.6,97.6 L298.9,99.3 L300.5,104.3 H308.4 L309.2,99.3 H299.2" fill="none" stroke="#9a9a9a" stroke-width="1.1" stroke-linejoin="round"/><path d="M299.9,101.6 H308.8" stroke="#9a9a9a" stroke-width="0.8"/><circle cx="301.8" cy="106.7" r="1.1" fill="#9a9a9a"/><circle cx="307" cy="106.7" r="1.1" fill="#9a9a9a"/><path d="M400.3,97.2 L406.4,97.2 L410.2,101.8 L405.2,106.8 L397.6,99.9 V97.2 Z" fill="none" stroke="#9a9a9a" stroke-width="0.9"/><path d="M397.6,97.2 H403.5 L407.6,101.6 L402.8,106.6 L397.6,101.7 Z" fill="#8c8c90"/><circle cx="399.8" cy="99.3" r="0.9" fill="#fff"/><rect x="488.9" y="97.6" width="1.4" height="9.2" fill="#8f8f8f"/><rect x="491" y="97.6" width="0.8" height="9.2" fill="#8f8f8f"/><rect x="492.6" y="97.6" width="1.6" height="9.2" fill="#8f8f8f"/><rect x="495" y="97.6" width="0.9" height="9.2" fill="#8f8f8f"/><rect x="496.8" y="97.6" width="1.3" height="9.2" fill="#8f8f8f"/><rect x="499.2" y="97.6" width="1.6" height="9.2" fill="#8f8f8f"/><rect x="611.2" y="96.85" width="12.1" height="1.9" rx="0.5" fill="#8e8e93"/><path d="M612,99.8 H622.6 V106.4 Q622.6,107.6 621.4,107.6 H613.2 Q612,107.6 612,106.4 Z" fill="#8e8e93"/><rect x="615.1" y="101.2" width="4.5" height="1.2" rx="0.5" fill="#d0d0d4"/><circle cx="196.7" cy="178" r="3.6" fill="none" stroke="#666" stroke-width="1.2"/><path d="M199.3,180.6 L201.5,182.8" stroke="#666" stroke-width="1.3" stroke-linecap="round"/><path d="M760.4,213.4 L763,210.9 L765.6,213.4 M760.4,216 L763,218.5 L765.6,216" fill="none" stroke="#9a9a9a" stroke-width="0.9"/><path d="M849.3,213.4 L851.9,210.9 L854.5,213.4 M849.3,216 L851.9,218.5 L854.5,216" fill="none" stroke="#9a9a9a" stroke-width="0.9"/></svg>
</div>
<div class="b" style="left:185px;top:201px;width:815px;height:345px;border:4px solid #f2232a;z-index:40"></div>
<div class="b" style="left:6.6px;top:129.3px;width:69.6px;height:22.9px;border:3.5px solid #f2232a;z-index:40"></div>
<div class="b" style="left:8.25px;top:154.5px;width:78.45px;height:24.1px;border:3.8px solid #f2232a;z-index:40"></div>
<svg style="left:0;top:0;z-index:41" width="1024" height="577"><circle cx="89.8" cy="112.95" r="14.35" fill="none" stroke="#f2232a" stroke-width="3.6"/><circle cx="108.1" cy="166.1" r="14.35" fill="none" stroke="#f2232a" stroke-width="3.6"/><path d="M84.9,107.3 L90.6,102.8" fill="none" stroke="#f2232a" stroke-width="2.3" stroke-linecap="butt"/><path d="M90.6,102.4 V122.8" fill="none" stroke="#f2232a" stroke-width="2.9"/><path d="M103.5,160.6 C103.5,157.8 105.8,156.3 108.7,156.3 C111.9,156.3 113.9,158.3 113.9,161.1 C113.9,163.8 111.8,165.8 103.6,174.6 L115.4,174.6" fill="none" stroke="#f2232a" stroke-width="2.4"/></svg>
<div class="b" style="left:7px;top:20px;width:1010px;height:536px;border:2px solid #686868;border-left-width:1.2px;border-radius:3px;z-index:30"></div>
</body></html>
